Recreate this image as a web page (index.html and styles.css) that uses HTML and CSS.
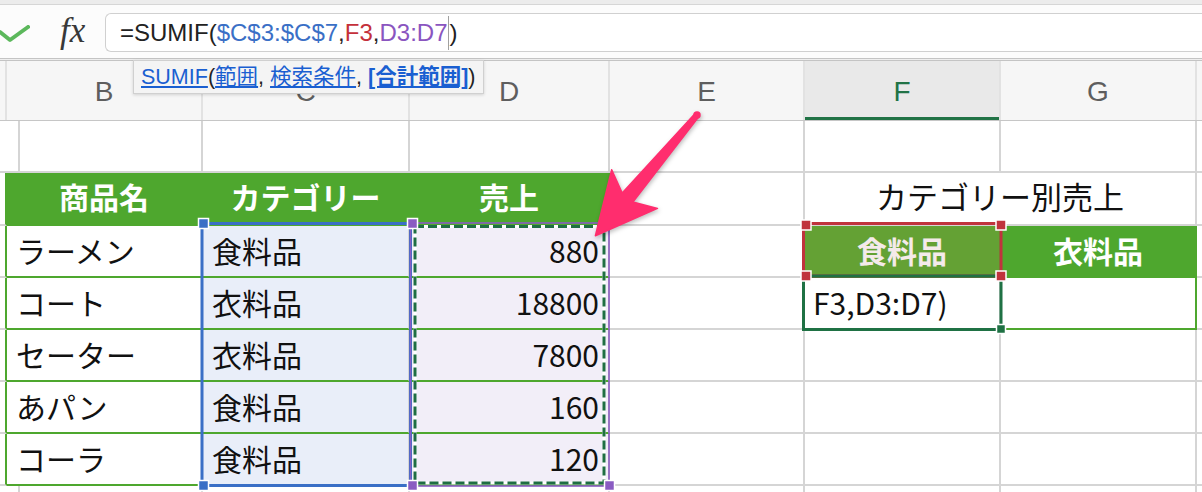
FILE: index.html
```html
<!DOCTYPE html>
<html lang="ja">

<head>
    <meta charset="UTF-8" />
    <meta name="viewport" content="width=device-width, initial-scale=1.0" />
    <title>SUMIF</title>
    <link rel="stylesheet" href="styles.css">
</head>

<body>
    <div class="app">
        <div class="topstrip"></div>

        <div class="formula-bar">
            <div class="check-wrap">
                <svg class="check" width="30" height="18" viewBox="0 0 30 18">
                    <polyline points="0,7 10,15 28,2" fill="none" stroke="#5cb85c" stroke-width="4" stroke-linecap="round" stroke-linejoin="round" />
                </svg>
            </div>
            <span class="fx">fx</span>
            <div class="formula-input">
                <span>=SUMIF(</span><span class="ref-blue">$C$3:$C$7</span><span>,</span><span class="ref-red">F3</span><span>,</span><span class="ref-purple">D3:D7</span><span class="caret"></span><span>)</span>
            </div>
        </div>
        <div class="bar-sep"></div>

        <div class="col-headers">
            <div class="hcell"></div>
            <div class="hcell">B</div>
            <div class="hcell">C</div>
            <div class="hcell">D</div>
            <div class="hcell">E</div>
            <div class="hcell active">F</div>
            <div class="hcell">G</div>
            <div class="hcell last"></div>
        </div>

        <div class="sheet">
            <!-- row 1 -->
            <div class="cell"></div>
            <div class="cell"></div>
            <div class="cell"></div>
            <div class="cell"></div>
            <div class="cell"></div>
            <div class="cell"></div>
            <div class="cell"></div>
            <div class="cell last"></div>

            <!-- row 2 -->
            <div class="cell edge"></div>
            <div class="cell th">商品名</div>
            <div class="cell th">カテゴリー</div>
            <div class="cell th">売上</div>
            <div class="cell"></div>
            <div class="cell title">カテゴリー別売上</div>
            <div class="cell last"></div>

            <!-- row 3 -->
            <div class="cell edge"></div>
            <div class="cell td">ラーメン</div>
            <div class="cell td cat">食料品</div>
            <div class="cell td amt">880</div>
            <div class="cell"></div>
            <div class="cell sum-head current">食料品</div>
            <div class="cell sum-head">衣料品</div>
            <div class="cell last"></div>

            <!-- row 4 -->
            <div class="cell edge"></div>
            <div class="cell td">コート</div>
            <div class="cell td cat">衣料品</div>
            <div class="cell td amt">18800</div>
            <div class="cell"></div>
            <div class="cell editing">F3,D3:D7)</div>
            <div class="cell sum-body"></div>
            <div class="cell last"></div>

            <!-- row 5 -->
            <div class="cell edge"></div>
            <div class="cell td">セーター</div>
            <div class="cell td cat">衣料品</div>
            <div class="cell td amt">7800</div>
            <div class="cell"></div>
            <div class="cell"></div>
            <div class="cell"></div>
            <div class="cell last"></div>

            <!-- row 6 -->
            <div class="cell edge"></div>
            <div class="cell td">あパン</div>
            <div class="cell td cat">食料品</div>
            <div class="cell td amt">160</div>
            <div class="cell"></div>
            <div class="cell"></div>
            <div class="cell"></div>
            <div class="cell last"></div>

            <!-- row 7 -->
            <div class="cell edge"></div>
            <div class="cell td">コーラ</div>
            <div class="cell td cat">食料品</div>
            <div class="cell td amt">120</div>
            <div class="cell"></div>
            <div class="cell"></div>
            <div class="cell"></div>
            <div class="cell last"></div>

            <!-- row 8 -->
            <div class="cell"></div>
            <div class="cell"></div>
            <div class="cell"></div>
            <div class="cell"></div>
            <div class="cell"></div>
            <div class="cell"></div>
            <div class="cell"></div>
            <div class="cell last"></div>
        </div>

        <div class="tooltip"><a>SUMIF</a>(<a>範囲</a>, <a>検索条件</a>, <a class="current-arg">[合計範囲]</a>)</div>

        <svg class="overlay" width="1202" height="492" viewBox="0 0 1202 492">
            <!-- C3:C7 range -->
            <rect x="202" y="223.5" width="208.5" height="262" fill="none" stroke="#3a6fc6" stroke-width="3" />
            <!-- D3:D7 range -->
            <rect x="410.5" y="223" width="198.5" height="263" fill="none" stroke="#8a5cc2" stroke-width="1.6" />
            <rect x="415" y="226.5" width="189" height="256.5" fill="none" stroke="#fff" stroke-width="3" />
            <rect x="415" y="226.5" width="189" height="256.5" fill="none" stroke="#1f6e43" stroke-width="3" stroke-dasharray="9 4" />

            <rect class="handle" x="198.5" y="218.5" width="10" height="10" fill="#3a6fc6" />
            <rect class="handle" x="198.5" y="480.5" width="10" height="10" fill="#3a6fc6" />
            <rect class="handle" x="407.5" y="218.5" width="10" height="10" fill="#8a5cc2" />
            <rect class="handle" x="407.5" y="480.5" width="10" height="10" fill="#8a5cc2" />
            <rect class="handle" x="604.5" y="218.5" width="10" height="10" fill="#8a5cc2" />
            <rect class="handle" x="604.5" y="480.5" width="10" height="10" fill="#8a5cc2" />

            <!-- F3 reference -->
            <rect x="803.5" y="223.5" width="197.5" height="52.5" fill="none" stroke="#c0333d" stroke-width="3" />
            <!-- active cell F4 -->
            <rect x="803.5" y="276" width="197.5" height="53.5" fill="none" stroke="#1f7144" stroke-width="3" />
            <rect class="handle" x="996.5" y="324.5" width="9" height="9" fill="#1f7144" />

            <rect class="handle" x="801" y="220" width="10" height="10" fill="#c0333d" />
            <rect class="handle" x="996" y="220" width="10" height="10" fill="#c0333d" />
            <rect class="handle" x="801" y="271" width="10" height="10" fill="#c0333d" />
            <rect class="handle" x="996" y="271" width="10" height="10" fill="#c0333d" />

            <!-- pointer arrow -->
            <g class="arrow">
                <polygon points="695.1,113.4 622.2,193 611.7,169.8 595.4,235.7 657.5,208.4 632.9,202 698.9,116.6" />
                <circle cx="697" cy="115" r="3" />
            </g>
        </svg>
    </div>
</body>

</html>
```

FILE: styles.css
```css
body {
    margin: 0;
    padding: 0;
    background-color: #fff;
}

.app {
    position: relative;
    width: 1202px;
    height: 492px;
    overflow: hidden;
    font-family: "Liberation Sans", "Noto Sans CJK JP", sans-serif;
}

/* toolbar remains at the very top */
.topstrip {
    height: 4px;
    background-color: #ececec;
    border-bottom: 1px solid #d6d6d6;
}

.formula-bar {
    display: flex;
    height: 53px;
    background-color: #fcfcfc;
}

.check-wrap {
    width: 58px;
    padding-top: 20px;
    box-sizing: border-box;
}

.check {
    display: block;
}

.fx {
    width: 47px;
    padding-left: 2px;
    box-sizing: border-box;
    font-family: "Liberation Serif", serif;
    font-style: italic;
    font-size: 35px;
    line-height: 52px;
    color: #383838;
}

.formula-input {
    flex: 1;
    display: flex;
    align-items: center;
    margin-top: 8px;
    height: 39px;
    box-sizing: border-box;
    padding: 1px 0 0 14px;
    background-color: #fff;
    border: 1px solid #d0d0d0;
    border-right: none;
    border-radius: 6px 0 0 6px;
    font-size: 24px;
    color: #222;
    white-space: nowrap;
}

.ref-blue {
    color: #3a6fc6;
}

.ref-red {
    color: #c4303a;
}

.ref-purple {
    color: #8a55c0;
}

.caret {
    display: inline-block;
    width: 1px;
    height: 34px;
    margin-left: 1px;
    background-color: #a0a0a0;
}

.bar-sep {
    height: 1px;
    background-color: #efefef;
    border-top: 1px solid #c4c4c4;
    border-bottom: 1px solid #c4c4c4;
}

/* column letters */
.col-headers {
    display: grid;
    grid-template-columns: 7px 196px 207px 200px 195px 196px 196px 5px;
    height: 59px;
    background-color: #f6f6f6;
    border-bottom: 1px solid #c6c6c6;
}

.hcell {
    display: flex;
    align-items: center;
    justify-content: center;
    border-right: 2px solid #e2e2e2;
    font-size: 28px;
    color: #5e5e5e;
    padding-top: 2px;
}

.hcell.active {
    background-color: #e9e9e9;
    color: #217346;
    box-shadow: inset 0 -3px 0 #217346;
}

.hcell.last {
    border-right: none;
}

/* the sheet itself */
.sheet {
    display: grid;
    grid-template-columns: 7px 196px 207px 200px 195px 196px 196px 5px;
    grid-template-rows: 52px 53px repeat(5, 52px) 30px;
    font-family: "Noto Sans CJK JP", sans-serif;
    font-size: 30px;
    color: #111;
}

.cell {
    display: flex;
    align-items: center;
    padding: 0 9px 3px;
    border-right: 2px solid #d5d5d5;
    border-bottom: 2px solid #d5d5d5;
    white-space: nowrap;
    overflow: hidden;
    box-sizing: border-box;
}

.cell.last {
    border-right: none;
}

.cell.edge {
    padding: 0;
    border-right-color: #4ea72e;
}

.cell.th {
    justify-content: center;
    background-color: #4ea72e;
    border-color: #4ea72e;
    color: #fff;
    font-weight: bold;
    padding-bottom: 6px;
}

.cell.td {
    border-bottom-color: #4ea72e;
}

.cell.cat {
    background-color: #e9eef9;
}

.cell.amt {
    justify-content: flex-end;
    background-color: #f2eef8;
}

.cell.title {
    grid-column: span 2;
    justify-content: center;
    font-size: 31px;
    padding-bottom: 6px;
}

.cell.sum-head {
    justify-content: center;
    background-color: #4ea72e;
    border-color: #4ea72e;
    color: #fff;
    font-weight: bold;
}

.cell.sum-head.current {
    background-color: #64a134;
    color: #f4eaea;
}

.cell.sum-body {
    border-right-color: #4ea72e;
    border-bottom-color: #4ea72e;
}

.cell.editing {
    padding-left: 8px;
}

/* argument hint under the formula bar */
.tooltip {
    position: absolute;
    left: 133px;
    top: 60px;
    height: 34px;
    line-height: 32px;
    padding: 0 7px;
    box-sizing: border-box;
    background-color: #f4f4f4;
    border: 1px solid #d0d0d0;
    box-shadow: 0 1px 3px rgba(0, 0, 0, 0.15);
    font-size: 21.5px;
    color: #222;
    white-space: nowrap;
}

.tooltip a {
    color: #1a5fd1;
    text-decoration: underline;
}

.tooltip .current-arg {
    font-weight: bold;
}

.overlay {
    position: absolute;
    left: 0;
    top: 0;
    pointer-events: none;
}

.handle {
    stroke: #fff;
    stroke-width: 1.5;
}

.arrow {
    fill: #ff2d6e;
    stroke: #ff2d6e;
    stroke-width: 1.5;
    stroke-linejoin: round;
    filter: drop-shadow(1px 2px 2px rgba(0, 0, 0, 0.25));
}
```
